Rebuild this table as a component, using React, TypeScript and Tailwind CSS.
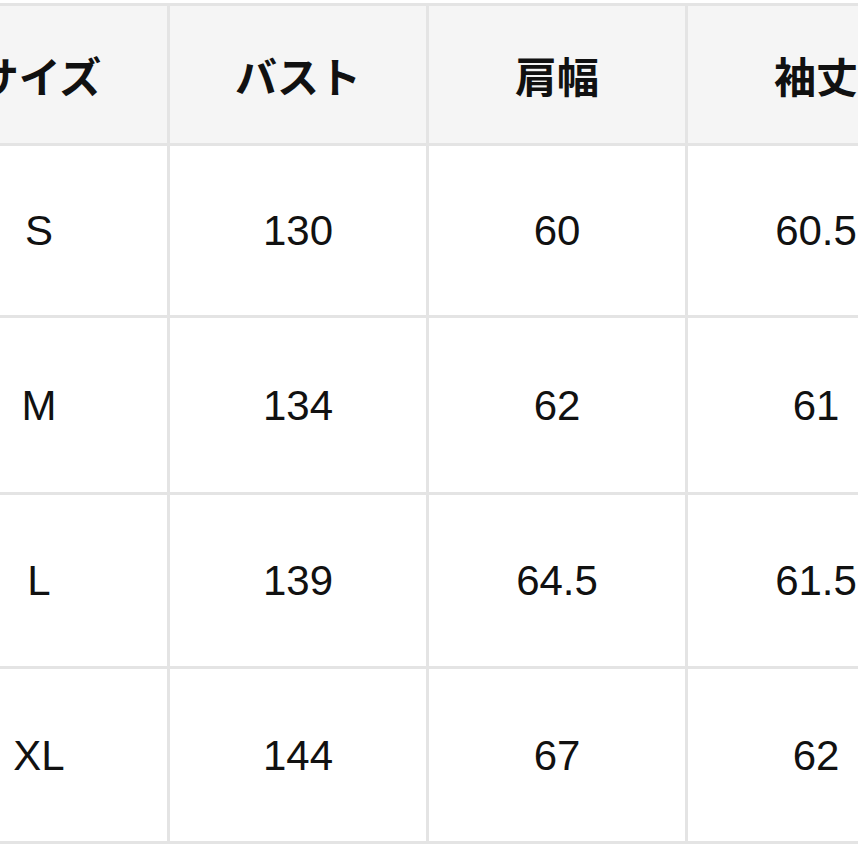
import React from "react";

const headers = ["サイズ", "バスト", "肩幅", "袖丈"];
const rows: { h: string; cells: string[] }[] = [
  { h: "h-[169px]", cells: ["S", "130", "60", "60.5"] },
  { h: "h-[174px]", cells: ["M", "134", "62", "61"] },
  { h: "h-[171px]", cells: ["L", "139", "64.5", "61.5"] },
  { h: "h-[172px]", cells: ["XL", "144", "67", "62"] },
];

export default function App() {
  return (
    <div className="w-[858px] h-[858px] overflow-hidden bg-white">
      <div
        className="mt-[3px] ml-[-92px] w-[1036px] bg-[#e4e4e4] p-[3px] flex flex-col gap-[3px]"
        style={{ fontFamily: '"Liberation Sans", "Noto Sans CJK JP", sans-serif' }}
      >
        <div className="grid grid-cols-[256px_256px_256px_256px] gap-[3px] h-[137px]">
          {headers.map((t) => (
            <div
              key={t}
              className="bg-[#f5f5f5] flex items-center justify-center text-[42px] font-bold text-[#111111]"
              style={{ fontFamily: '"Noto Sans CJK JP", sans-serif' }}
            >
              {t}
            </div>
          ))}
        </div>
        {rows.map((r) => (
          <div key={r.cells[0]} className={`grid grid-cols-[256px_256px_256px_256px] gap-[3px] ${r.h}`}>
            {r.cells.map((c, i) => (
              <div
                key={i}
                className="bg-white flex items-center justify-center text-[42px] text-[#111111]"
              >
                {c}
              </div>
            ))}
          </div>
        ))}
      </div>
    </div>
  );
}
